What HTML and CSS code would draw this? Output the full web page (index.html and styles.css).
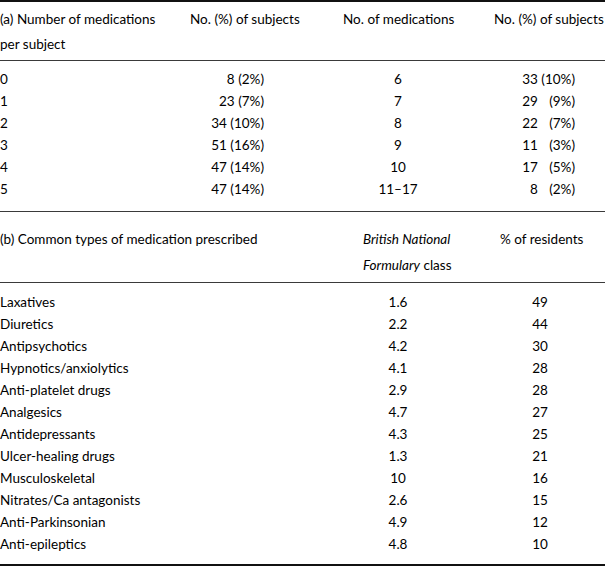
FILE: index.html
```html
<!DOCTYPE html>
<html lang="en">
<head>
<meta charset="utf-8">
<title>Medications</title>
<link rel="stylesheet" href="styles.css">
</head>
<body>
<table class="med">
  <colgroup>
    <col class="c1"><col class="c2"><col class="c3"><col class="c4">
  </colgroup>
  <tbody class="part-a">
    <tr class="head head-a">
      <th>(a) Number of medications<br>per subject</th>
      <th class="h2">No. (%) of subjects</th>
      <th class="h3">No. of medications</th>
      <th class="h4">No. (%) of subjects</th>
    </tr>
    <tr><td>0</td><td class="v2">8 (2%)</td><td class="v3">6</td><td class="v4">33 (10%)</td></tr>
    <tr><td>1</td><td class="v2">23 (7%)</td><td class="v3">7</td><td class="v4">29 &#8199;(9%)</td></tr>
    <tr><td>2</td><td class="v2">34 (10%)</td><td class="v3">8</td><td class="v4">22 &#8199;(7%)</td></tr>
    <tr><td>3</td><td class="v2">51 (16%)</td><td class="v3">9</td><td class="v4">11 &#8199;(3%)</td></tr>
    <tr><td>4</td><td class="v2">47 (14%)</td><td class="v3">10</td><td class="v4">17 &#8199;(5%)</td></tr>
    <tr><td>5</td><td class="v2">47 (14%)</td><td class="v3">11–17</td><td class="v4">&#8199;8 &#8199;(2%)</td></tr>
  </tbody>
  <tbody class="part-b">
    <tr class="head head-b">
      <th colspan="2">(b) Common types of medication prescribed</th>
      <th class="hb3"><i>British National</i><br><i>Formulary</i> class</th>
      <th class="hb4">% of residents</th>
    </tr>
    <tr><td colspan="2">Laxatives</td><td class="b3">1.6</td><td class="b4">49</td></tr>
    <tr><td colspan="2">Diuretics</td><td class="b3">2.2</td><td class="b4">44</td></tr>
    <tr><td colspan="2">Antipsychotics</td><td class="b3">4.2</td><td class="b4">30</td></tr>
    <tr><td colspan="2">Hypnotics/anxiolytics</td><td class="b3">4.1</td><td class="b4">28</td></tr>
    <tr><td colspan="2">Anti-platelet drugs</td><td class="b3">2.9</td><td class="b4">28</td></tr>
    <tr><td colspan="2">Analgesics</td><td class="b3">4.7</td><td class="b4">27</td></tr>
    <tr><td colspan="2">Antidepressants</td><td class="b3">4.3</td><td class="b4">25</td></tr>
    <tr><td colspan="2">Ulcer-healing drugs</td><td class="b3">1.3</td><td class="b4">21</td></tr>
    <tr><td colspan="2">Musculoskeletal</td><td class="b3">10</td><td class="b4">16</td></tr>
    <tr><td colspan="2">Nitrates/Ca antagonists</td><td class="b3">2.6</td><td class="b4">15</td></tr>
    <tr><td colspan="2">Anti-Parkinsonian</td><td class="b3">4.9</td><td class="b4">12</td></tr>
    <tr><td colspan="2">Anti-epileptics</td><td class="b3">4.8</td><td class="b4">10</td></tr>
  </tbody>
</table>
</body>
</html>
```
FILE: styles.css
```css
html, body {
  margin: 0;
  padding: 0;
  background: #fff;
}

body {
  font-family: Lato, "Open Sans", sans-serif;
  font-size: 13.5px;
  color: #000;
}

.med {
  border-collapse: collapse;
  table-layout: fixed;
  width: 605px;
  border-top: 2px solid #111;
  border-bottom: 2px solid #111;
}

.c1 { width: 190px; }
.c2 { width: 150px; }
.c3 { width: 116px; }
.c4 { width: 149px; }

.med th,
.med td {
  padding: 0;
  font-weight: normal;
  text-align: left;
  vertical-align: top;
  line-height: 22px;
  white-space: nowrap;
}

.med .head th {
  border-bottom: 1px solid #3a3a3a;
}

.head-a th {
  line-height: 25px;
  padding-top: 5px;
  padding-bottom: 3px;
}

.head-b th {
  line-height: 26px;
  padding-top: 14px;
  padding-bottom: 4px;
}

.part-a .head + tr td { padding-top: 7px; }
.part-a tr:last-child td { padding-bottom: 11px; border-bottom: 1px solid #3a3a3a; }
.part-b .head + tr td { padding-top: 8px; }
.part-b tr:last-child td { padding-bottom: 9px; }

.med .h3 { padding-left: 3px; }
.med .h4 { padding-left: 38px; }

.med .v2 { text-align: right; padding-right: 76px; }
.med .v3 { text-align: center; }
.med .v4 { text-align: right; padding-right: 30px; }

.med .hb3 { padding-left: 23px; }
.med .hb4 { padding-left: 44px; }
.med .b3 { text-align: center; }
.med .b4 { text-align: center; padding-left: 19px; }
```
